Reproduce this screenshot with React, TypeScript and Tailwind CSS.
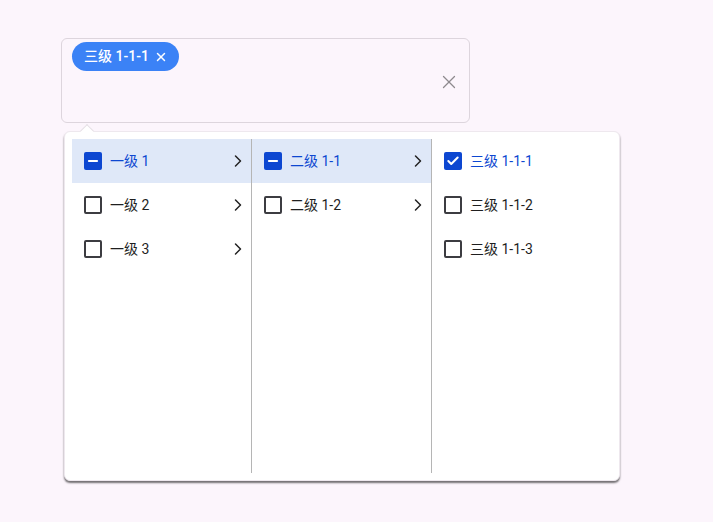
import { ChevronRight, X, Check, Minus } from "lucide-react";

type Row = { label: string; state: "none" | "half" | "full"; active?: boolean; hasChildren?: boolean };

const columns: Row[][] = [
	[
		{ label: "一级 1", state: "half", active: true, hasChildren: true },
		{ label: "一级 2", state: "none", hasChildren: true },
		{ label: "一级 3", state: "none", hasChildren: true },
	],
	[
		{ label: "二级 1-1", state: "half", active: true, hasChildren: true },
		{ label: "二级 1-2", state: "none", hasChildren: true },
	],
	[
		{ label: "三级 1-1-1", state: "full" },
		{ label: "三级 1-1-2", state: "none" },
		{ label: "三级 1-1-3", state: "none" },
	],
];

function Box({ state }: { state: Row["state"] }) {
	if (state === "none") {
		return <span className="h-[18px] w-[18px] shrink-0 rounded-[2px] border-2 border-[#3c3c41]" />;
	}
	return (
		<span className="flex h-[18px] w-[18px] shrink-0 items-center justify-center rounded-[2px] bg-[#0d47d1] text-white">
			{state === "half" ? <Minus size={14} strokeWidth={3.5} /> : <Check size={14} strokeWidth={3.5} />}
		</span>
	);
}

export default function App() {
	return (
		<div
			className="min-h-[522px] bg-[#fcf5fc] pl-[61px] pt-[38px]"
			style={{ fontFamily: 'Roboto, "Noto Sans CJK SC", sans-serif' }}
		>
			<div className="relative h-[85px] w-[409px] rounded-md border border-[#ddd5dd] px-[10px] pt-[3px]">
				<span className="inline-flex h-[29px] items-center gap-[5px] rounded-full bg-[#3b82f6] pl-[12px] pr-[11px] text-[14px] font-medium text-white">
					三级 1-1-1
					<X size={14} strokeWidth={2.5} />
				</span>
				<X size={22} strokeWidth={1.4} className="absolute right-[9px] top-[32px] text-[#8e8a8e]" />
			</div>

			<div className="relative ml-[3px] mt-[8px] w-[556px] rounded-md border border-[#eee8ee] bg-white p-[7px] shadow-[0_2px_2px_rgba(0,0,0,0.55)]">
				<span className="absolute -top-[6px] left-[17px] h-[10px] w-[10px] rotate-45 border-l border-t border-[#e6dfe6] bg-white" />
				<div className="flex h-[334px]">
					{columns.map((col, ci) => (
						<div
							key={ci}
							className={ci < 2 ? "w-[180px] border-r border-[#b5b5b5]" : "w-[180px]"}
						>
							{col.map((row) => (
								<div
									key={row.label}
									className={
										"flex h-[44px] items-center gap-[8px] pl-[12px] pr-[3px] text-[14px] " +
										(row.active ? "bg-[#dfe8f8] " : "") +
										(row.state === "none" ? "text-[#1f1f1f]" : "text-[#0d47d1]")
									}
								>
									<Box state={row.state} />
									<span className="flex-1">{row.label}</span>
									{row.hasChildren && (
										<ChevronRight size={20} strokeWidth={1.8} className="text-[#222]" />
									)}
								</div>
							))}
						</div>
					))}
				</div>
			</div>
		</div>
	);
}
